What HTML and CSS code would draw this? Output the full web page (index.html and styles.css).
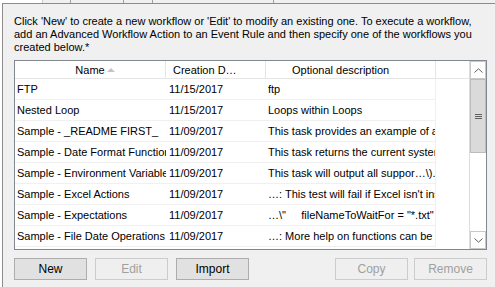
FILE: index.html
```html
<!DOCTYPE html>
<html>
<head>
<meta charset="utf-8">
<link rel="stylesheet" href="styles.css">
</head>
<body>
<div class="topstrip">
  <span class="seg s1"></span><span class="seg s2"></span><span class="seg s3"></span><span class="seg s4"></span><span class="seg s5"></span><span class="seg s6"></span>
</div>
<div class="panel">
  <p class="intro">Click 'New' to create a new workflow or 'Edit' to modify an existing one. To execute a workflow, add an Advanced Workflow Action to an Event Rule and then specify one of the workflows you created below.*</p>
  <div class="listbox">
    <div class="listmain">
      <div class="header">
        <div class="hcell c1">Name<span class="sortarrow"></span></div>
        <div class="hcell c2">Creation D…</div>
        <div class="hcell c3">Optional description</div>
        <div class="hcell c4"></div>
      </div>
      <div class="row"><div class="cell c1">FTP</div><div class="cell c2">11/15/2017</div><div class="cell c3">ftp</div></div>
      <div class="row"><div class="cell c1">Nested Loop</div><div class="cell c2">11/15/2017</div><div class="cell c3">Loops within Loops</div></div>
      <div class="row"><div class="cell c1">Sample - _README FIRST_</div><div class="cell c2">11/09/2017</div><div class="cell c3">This task provides an example of adding</div></div>
      <div class="row"><div class="cell c1">Sample - Date Format Functions</div><div class="cell c2">11/09/2017</div><div class="cell c3">This task returns the current system date</div></div>
      <div class="row"><div class="cell c1">Sample - Environment Variables</div><div class="cell c2">11/09/2017</div><div class="cell c3">This task will output all suppor…\).</div></div>
      <div class="row"><div class="cell c1">Sample - Excel Actions</div><div class="cell c2">11/09/2017</div><div class="cell c3">…: This test will fail if Excel isn't installed</div></div>
      <div class="row"><div class="cell c1">Sample - Expectations</div><div class="cell c2">11/09/2017</div><div class="cell c3">…\"     fileNameToWaitFor = "*.txt"</div></div>
      <div class="row"><div class="cell c1">Sample - File Date Operations</div><div class="cell c2">11/09/2017</div><div class="cell c3">…: More help on functions can be found</div></div>
    </div>
    <div class="scrollbar">
      <div class="sbtn up"><svg width="9" height="5" viewBox="0 0 9 5"><path d="M0.5 4.5 L4.5 0.8 L8.5 4.5" fill="none" stroke="#606060" stroke-width="1"/></svg></div>
      <div class="thumb"><span class="grip"></span><span class="grip"></span><span class="grip"></span></div>
      <div class="track"></div>
      <div class="sbtn down"><svg width="9" height="5" viewBox="0 0 9 5"><path d="M0.5 0.5 L4.5 4.2 L8.5 0.5" fill="none" stroke="#606060" stroke-width="1"/></svg></div>
    </div>
  </div>
  <div class="buttons">
    <button class="btn">New</button>
    <button class="btn disabled">Edit</button>
    <button class="btn">Import</button>
    <span class="spacer"></span>
    <button class="btn disabled">Copy</button>
    <button class="btn disabled last">Remove</button>
  </div>
</div>
</body>
</html>
```
FILE: styles.css
```css
html, body {
  margin: 0;
  padding: 0;
  background: #ffffff;
  width: 495px;
  height: 287px;
  overflow: hidden;
  font-family: "Liberation Sans", Arial, sans-serif;
  font-size: 11px;
  color: #000;
}
.topstrip {
  height: 3px;
  display: flex;
  background: #f0f0f0;
}
.seg {
  height: 3px;
  border-right: 1px solid #a0a0a0;
  box-sizing: border-box;
}
.s1 { width: 43px; background: #fff; border-right-color: #c8c8c8; }
.s2 { width: 28px; }
.s3 { width: 53px; }
.s4 { width: 29px; }
.s5 { width: 121px; }
.s6 { flex: 1; border-right: none; }
.panel {
  margin-left: 2px;
  border-top: 1px solid #8c8c8c;
  border-left: 1px solid #8c8c8c;
  background: #f0f0f0;
  height: 284px;
  box-sizing: border-box;
  padding: 11px 0 0 11px;
}
.intro {
  margin: 0;
  line-height: 13px;
  width: 470px;
}
.listbox {
  margin-top: 6px;
  width: 473px;
  height: 190px;
  box-sizing: border-box;
  border: 1px solid #828790;
  background: #fff;
  display: flex;
}
.listmain {
  width: 454px;
  overflow: hidden;
}
.header {
  display: flex;
  height: 18px;
  border-bottom: 1px solid #e5e5e5;
  box-sizing: border-box;
}
.hcell {
  border-right: 1px solid #e5e5e5;
  box-sizing: border-box;
  line-height: 18px;
  white-space: nowrap;
  overflow: hidden;
  position: relative;
}
.hcell.c1 { width: 151px; text-align: center; }
.hcell.c2 { width: 100px; padding-left: 7px; }
.hcell.c3 { width: 170px; padding-left: 26px; }
.hcell.c4 { flex: 1; border-right: none; }
.sortarrow {
  position: absolute;
  left: 92px;
  top: 7px;
  width: 0;
  height: 0;
  border-left: 4px solid transparent;
  border-right: 4px solid transparent;
  border-bottom: 4px solid #c4c4c4;
}
.row {
  display: flex;
  height: 21px;
  width: 421px;
  border-bottom: 1px solid #f0f0f0;
  box-sizing: border-box;
  border-right: 1px solid #f0f0f0;
}
.cell {
  white-space: pre;
  overflow: hidden;
  line-height: 20px;
  box-sizing: border-box;
}
.cell.c1 { width: 151px; padding-left: 2px; }
.cell.c2 { width: 100px; padding-left: 3px; }
.cell.c3 { width: 169px; padding-left: 2px; }
.scrollbar {
  width: 17px;
  display: flex;
  flex-direction: column;
  border-left: 1px solid #dcdcdc;
  box-sizing: border-box;
  background: #fff;
}
.sbtn {
  height: 18px;
  display: flex;
  align-items: center;
  justify-content: center;
  border: 1px solid #c8c8c8;
  box-sizing: border-box;
  background: #fff;
}
.thumb {
  height: 74px;
  background: #dadada;
  border: 1px solid #bcbcbc;
  box-sizing: border-box;
  display: flex;
  flex-direction: column;
  align-items: center;
  justify-content: center;
  gap: 1px;
}
.grip {
  width: 7px;
  height: 1px;
  background: #606060;
}
.track { flex: 1; background: #fff; }
.buttons {
  display: flex;
  margin-top: 8px;
  gap: 8px;
  width: 473px;
}
.spacer { flex: 1; }
.btn {
  width: 73px;
  height: 22px;
  margin: 0;
  padding: 0;
  font: inherit;
  font-size: 12px;
  color: #000;
  background: #e1e1e1;
  border: 1px solid #adadad;
  border-radius: 0;
}
.btn.disabled {
  background: #efefef;
  border-color: #cccccc;
  color: #a0a0a0;
}
.btn.last { margin-left: -2px; }
```
